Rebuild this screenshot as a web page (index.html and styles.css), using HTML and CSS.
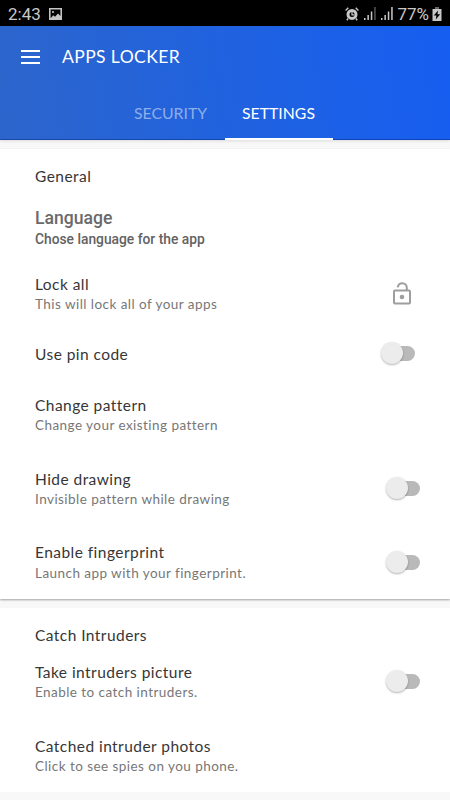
FILE: index.html
```html
<!DOCTYPE html>
<html lang="en">
<head>
  <meta charset="UTF-8" />
  <meta name="viewport" content="width=device-width, initial-scale=1.0" />
  <title>Apps Locker</title>
  <link rel="stylesheet" href="styles.css">
</head>
<body>
  <!-- Status bar -->
  <div class="status-bar">
    <span class="clock">2:43</span>
    <svg class="icon-image" width="13" height="12" viewBox="0 0 13 12">
      <path fill="#c4c4c4" fill-rule="evenodd" d="M0 0h13v12H0z M1.6 1.6v8.6l2.7-3 1.7 1.6 3-3.4 2.4 2.6V1.6z" />
      <circle cx="4" cy="4" r="1.1" fill="#c4c4c4" />
    </svg>
    <div class="status-right">
      <svg width="14" height="14" viewBox="0 0 14 14" fill="none" stroke="#c8c8c8">
        <circle cx="7" cy="7.4" r="4" stroke-width="3" />
        <path d="M7 4.8v3h2.3" stroke-width="1.2" />
        <path d="M.6 3.4 3.3.8M13.4 3.4 10.7.8M3.2 11.5 1.8 13.2M10.8 11.5l1.4 1.7" stroke-width="1.4" />
      </svg>
      <svg class="signal" width="12" height="13" viewBox="0 0 12 13">
        <path fill="#c8c8c8" d="M0 11h1.500v2H0zM3.400 8h1.500v5H3.400zM6.800 4.500h1.500V13H6.800z" />
        <path fill="#555" d="M10.200 0h1.500v13h-1.500z" />
      </svg>
      <svg class="signal" width="12" height="13" viewBox="0 0 12 13">
        <path fill="#c8c8c8" d="M0 11h1.500v2H0zM3.400 8h1.500v5H3.400zM6.800 4.500h1.500V13H6.800zM10.200 0h1.500v13h-1.500z" />
      </svg>
      <span class="percent">77%</span>
      <svg class="battery" width="10" height="14" viewBox="0 0 10 14">
        <path fill="#666" d="M3 0h4v2H3z" />
        <path fill="#c8c8c8" d="M.5 2h9v12h-9z" />
        <path fill="#000" d="M6 3.400 1.800 8.600h2.600L3.800 12.600 8.200 7.200H5.500z" />
      </svg>
    </div>
  </div>

  <!-- Header -->
  <header class="app-header">
    <div class="toolbar">
      <button class="hamburger" aria-label="Open menu"><i></i><i></i><i></i></button>
      <h1>APPS LOCKER</h1>
    </div>
    <nav class="tabs">
      <a class="tab">SECURITY</a>
      <a class="tab active">SETTINGS</a>
    </nav>
  </header>

  <!-- General -->
  <section class="card general">
    <h2>General</h2>
    <div class="row language">
      <div>
        <h3>Language</h3>
        <p>Chose language for the app</p>
      </div>
    </div>
    <div class="row lock-all">
      <div>
        <h3>Lock all</h3>
        <p>This will lock all of your apps</p>
      </div>
      <svg class="lock" width="18" height="23" viewBox="0 0 18 23" fill="none" stroke="#9e9e9e" stroke-width="2">
        <rect x="1" y="8.500" width="16" height="13" rx="1" />
        <path d="M4.700 5.400C5.200 2.800 7 1.200 9.300 1.200c2.600 0 4.500 1.900 4.500 4.500v2.800" />
        <circle cx="9" cy="15" r="2.300" fill="#9e9e9e" stroke="none" />
      </svg>
    </div>
    <div class="row pin">
      <div><h3>Use pin code</h3></div>
      <span class="switch"></span>
    </div>
    <div class="row change">
      <div>
        <h3>Change pattern</h3>
        <p>Change your existing pattern</p>
      </div>
    </div>
    <div class="row hide">
      <div>
        <h3>Hide drawing</h3>
        <p>Invisible pattern while drawing</p>
      </div>
      <span class="switch"></span>
    </div>
    <div class="row fingerprint">
      <div>
        <h3>Enable fingerprint</h3>
        <p>Launch app with your fingerprint.</p>
      </div>
      <span class="switch"></span>
    </div>
  </section>

  <!-- Catch Intruders -->
  <section class="card intruders">
    <h2>Catch Intruders</h2>
    <div class="row take">
      <div>
        <h3>Take intruders picture</h3>
        <p>Enable to catch intruders.</p>
      </div>
      <span class="switch"></span>
    </div>
    <div class="row photos">
      <div>
        <h3>Catched intruder photos</h3>
        <p>Click to see spies on you phone.</p>
      </div>
    </div>
  </section>
</body>
</html>
```

FILE: styles.css
```css
* {
  margin: 0;
  padding: 0;
  box-sizing: border-box;
}

body {
  height: 800px;
  overflow: hidden;
  background: #f8f8f8;
  font-family: Lato, "Liberation Sans", sans-serif;
  white-space: nowrap;
}

/* Status bar */
.status-bar {
  display: flex;
  align-items: center;
  height: 26px;
  padding: 1px 8px 0;
  background: #000;
  color: #c8c8c8;
  font: 17px/26px Roboto, sans-serif;
}

.clock {
  width: 41px;
}

.status-right {
  display: flex;
  align-items: center;
  margin-left: auto;
}

.signal {
  margin: 0 0 1px 5px;
}

.percent {
  margin-left: 4px;
}

.battery {
  margin-left: 3px;
}

/* Header */
.app-header {
  height: 114px;
  background: linear-gradient(80deg, #2d65cb 0%, #2062df 50%, #165ef1 100%);
  box-shadow: inset 0 -1px 0 rgba(0, 30, 110, 0.4), 0 1px 3px rgba(0, 0, 0, 0.12);
  color: #fff;
}

.toolbar {
  display: flex;
  align-items: center;
  height: 61px;
  padding-left: 21px;
}

.hamburger {
  display: flex;
  flex-direction: column;
  gap: 4px;
  width: 19px;
  margin-top: 1px;
  border: 0;
  background: none;
}

.hamburger i {
  height: 2px;
  background: #fff;
}

h1 {
  margin-left: 22px;
  font-size: 17.5px;
  font-weight: 400;
  letter-spacing: 0.4px;
}

.tabs {
  display: flex;
  justify-content: center;
  height: 53px;
  padding-right: 1px;
}

.tab {
  width: 108px;
  line-height: 51px;
  text-align: center;
  font-size: 15.8px;
  color: #8eaeea;
}

.tab.active {
  color: #fff;
  border-bottom: 2px solid #fff;
}

/* Cards */
.card {
  padding: 17px 30px 0 35px;
  background: #fff;
}

.general {
  height: 450px;
  margin-top: 9px;
  box-shadow: 0 1px 2px rgba(0, 0, 0, 0.35);
}

.intruders {
  height: 184px;
  margin-top: 9px;
}

h2,
h3 {
  font-size: 15.5px;
  line-height: 20px;
  font-weight: 400;
  letter-spacing: 0.45px;
  color: #363636;
}

p {
  font-size: 13.5px;
  line-height: 21px;
  letter-spacing: 0.45px;
  color: #777;
}

.row {
  display: flex;
  justify-content: space-between;
  align-items: center;
}

.language {
  margin-top: 22px;
  font-family: Roboto, sans-serif;
}

.language h3 {
  font-size: 17.6px;
  font-weight: 500;
  letter-spacing: 0;
  color: #6a6a6a;
}

.language p {
  padding-top: 1px;
  font-size: 13.8px;
  line-height: 20px;
  font-weight: 500;
  letter-spacing: 0;
  color: #626262;
}

.lock-all {
  margin-top: 25px;
}

.lock {
  margin: 0 9px 2px 0;
}

.pin {
  height: 20px;
  margin-top: 29px;
}

.change {
  margin-top: 31px;
}

.hide,
.photos {
  margin-top: 33px;
}

.fingerprint {
  margin-top: 32px;
}

.fingerprint p {
  line-height: 22px;
}

.take {
  margin-top: 17px;
}

/* Switches */
.switch {
  position: relative;
  width: 30px;
  height: 15px;
  margin-bottom: 2px;
  border-radius: 8px;
  background: #b9b9b9;
}

.pin .switch {
  margin: 0 5px 1px 0;
}

.switch::before {
  content: "";
  position: absolute;
  left: -4px;
  top: -4px;
  width: 22px;
  height: 22px;
  border-radius: 50%;
  background: #ececec;
  box-shadow: 0 1px 2px rgba(0, 0, 0, 0.3);
}
```
